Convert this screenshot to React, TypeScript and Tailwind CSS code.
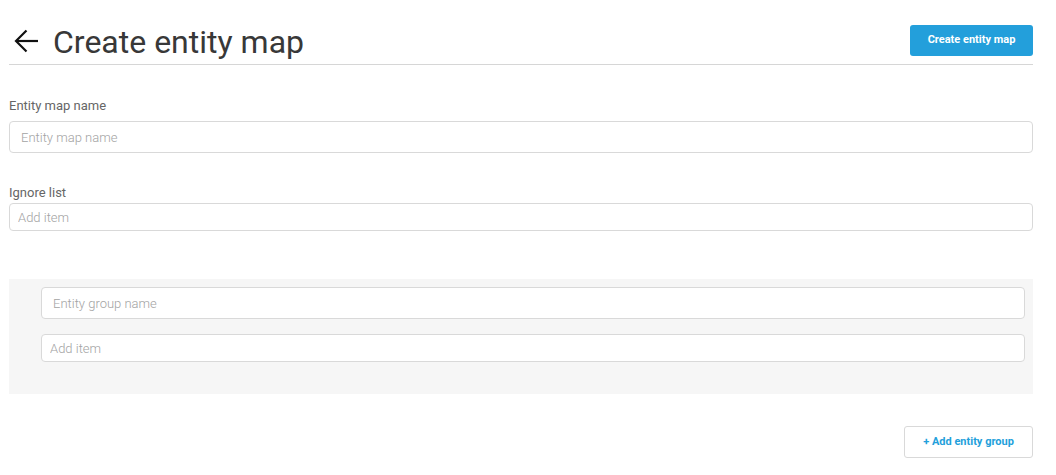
import React from "react";

export default function App() {
  const font = { fontFamily: "Roboto, 'Liberation Sans', sans-serif" };
  const inputBase =
    "block w-full rounded-[4px] border border-[#d9d9d9] bg-white text-[13px] text-[#333] placeholder:text-[#a3a3a3] placeholder:font-light outline-none";
  return (
    <div className="min-h-[475px] bg-white pl-[9px] pr-[23px]" style={font}>
      <div className="flex items-start justify-between pt-[23px] pb-[3px] border-b border-[#d6d6d6]">
        <div className="flex items-start">
          <svg width="26" height="24" viewBox="0 0 26 24" className="ml-[4px] mt-[6px]" fill="none" stroke="#111" strokeWidth="2.2" strokeLinecap="butt">
            <path d="M25 12 H3" />
            <path d="M13.5 1.5 L3 12 L13.5 22.5" />
          </svg>
          <h1 className="ml-[14px] text-[32px] leading-[38px] text-[#383838] font-normal">Create entity map</h1>
        </div>
        <button className="mt-[2px] h-[31px] w-[123px] rounded-[3px] bg-[#239fdb] text-white text-[11px] font-bold">
          Create entity map
        </button>
      </div>

      <div className="mt-[33px] text-[13px] leading-[16px] text-[#666]">Entity map name</div>
      <input className={`mt-[7px] h-[32px] pl-[11px] ${inputBase}`} placeholder="Entity map name" />

      <div className="mt-[32px] text-[13px] leading-[16px] text-[#666]">Ignore list</div>
      <input className={`mt-[2px] h-[28px] pl-[8px] ${inputBase}`} placeholder="Add item" />

      <div className="mt-[48px] bg-[#f6f6f6] pl-[32px] pr-[8px] pt-[8px] pb-[32px]">
        <input className={`h-[32px] pl-[11px] ${inputBase}`} placeholder="Entity group name" />
        <input className={`mt-[15px] h-[28px] pl-[8px] ${inputBase}`} placeholder="Add item" />
      </div>

      <div className="mt-[32px] flex justify-end">
        <button className="h-[32px] w-[129px] rounded-[3px] border border-[#d9d9d9] bg-white text-[#239fdb] text-[11px] font-bold">
          + Add entity group
        </button>
      </div>
    </div>
  );
}
